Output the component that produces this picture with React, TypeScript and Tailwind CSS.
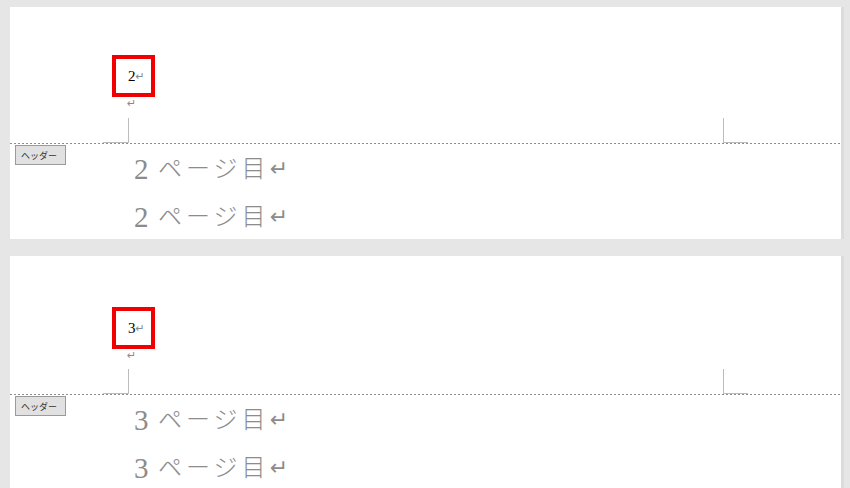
import React from 'react';

type PageInfo = {
  n: string;
  headerClass: string; // header area height + top padding, differs a bit per page
};

const pages: PageInfo[] = [
  { n: '2', headerClass: 'h-[136px] pt-[48px]' },
  { n: '3', headerClass: 'h-[138px] pt-[51px]' },
];

function Page({ n, headerClass }: PageInfo) {
  return (
    <div className="w-[831px] h-[232px] shrink-0 bg-white overflow-hidden border-r-[3px] border-[#dcdcdc] box-content">
      {/* header area */}
      <div className={`relative ${headerClass}`}>
        <div className="ml-[102px] w-[43px] h-[42px] border-4 border-[#f00000] flex items-center pl-[12px]">
          <span className="font-['Liberation_Serif',serif] text-[15px] leading-none text-black">{n}</span>
          <span className="font-['DejaVu_Sans',sans-serif] text-[11px] leading-none text-[#8a8a8a] mt-[1px]">↵</span>
        </div>
        <div className="ml-[117px] mt-[1px] font-['DejaVu_Sans',sans-serif] text-[11px] leading-none text-[#8a8a8a]">↵</div>
        {/* crop marks */}
        <div className="absolute left-[93px] bottom-0 w-[26px] h-[25px] border-r border-b border-[#bcbcbc]" />
        <div className="absolute left-[713px] bottom-0 w-[25px] h-[25px] border-l border-b border-[#bcbcbc]" />
      </div>
      <div className="h-px bg-[repeating-linear-gradient(to_right,#8c8c8c_0_2px,transparent_2px_4px)]" />
      {/* body */}
      <div className="relative pl-[124px] pt-px">
        <div className="absolute left-[5px] top-px w-[51px] h-[20px] bg-[#e1e1e1] border border-[#9a9a9a] flex items-center pl-[5px] font-['Noto_Sans_CJK_JP',sans-serif] text-[9px] leading-none text-[#333]">
          ヘッダー
        </div>
        {[0, 1].map((i) => (
          <div
            key={i}
            className="h-[48px] flex items-center text-[#8c8c8c] font-['Liberation_Serif','Noto_Sans_CJK_JP',serif]"
          >
            <span className="text-[29px] leading-none w-[24px]">{n}</span>
            <span className="text-[24px] leading-none tracking-[4px] font-light">ページ目</span>
            <span className="font-['DejaVu_Sans',sans-serif] text-[22px] leading-none">↵</span>
          </div>
        ))}
      </div>
    </div>
  );
}

export default function App() {
  return (
    <div className="w-[850px] h-[488px] overflow-hidden bg-[#e6e6e6] pt-[7px] pl-[10px] flex flex-col gap-[17px]">
      {pages.map((p) => (
        <Page key={p.n} {...p} />
      ))}
    </div>
  );
}
